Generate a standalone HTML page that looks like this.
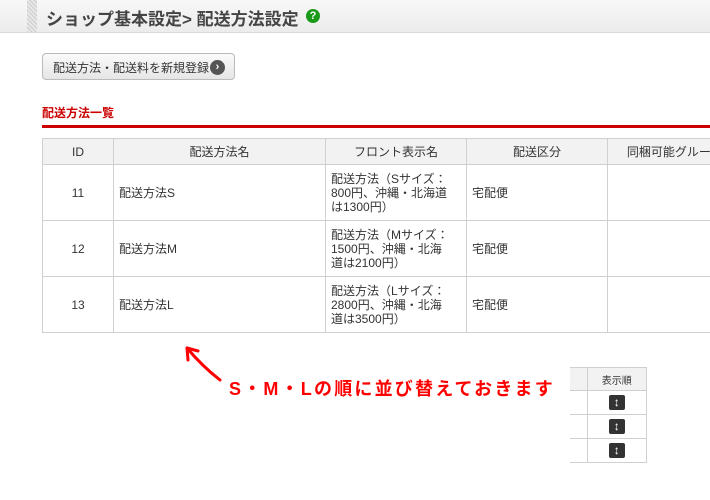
<!DOCTYPE html>
<html><head><meta charset="utf-8"><style>
*{margin:0;padding:0;box-sizing:border-box}
body{width:710px;height:500px;background:#fff;font-family:"Liberation Sans","Noto Sans CJK JP",sans-serif;color:#333;position:relative;overflow:hidden;font-size:12px}
.hdr{position:absolute;left:0;top:0;width:710px;height:33px;background:linear-gradient(#f8f8f8,#ececec);border-bottom:1px solid #d8d8dd}
.stripe{position:absolute;left:27px;top:0;width:10px;height:32px;background:repeating-linear-gradient(45deg,#ccc 0 1px,#e8e8e8 1px 3px)}
.title{position:absolute;left:46px;top:5px;font-size:17px;font-weight:bold;color:#444}
.help{position:absolute;left:306px;top:9px;width:14px;height:14px;border-radius:50%;background:#1a9a1a;color:#fff;font-size:11px;font-weight:bold;text-align:center;line-height:14px}
.btn{position:absolute;left:42px;top:53px;width:193px;height:27px;border:1px solid #bbb;border-radius:4px;background:linear-gradient(#fafafa,#e6e6e6);font-size:12px;color:#333;padding:5px 0 0 10px}
.btn i{position:absolute;left:167px;top:6px;width:15px;height:15px;border-radius:50%;background:#555;color:#fff;font-style:normal;font-size:11px;text-align:center;line-height:15px;font-weight:bold}
.sec{position:absolute;left:42px;top:104px;font-size:12px;font-weight:bold;color:#c00}
.red{position:absolute;left:42px;top:125px;width:668px;height:3px;background:#c00}
table{position:absolute;border-collapse:collapse;font-size:12px}
td,th{border:1px solid #d0d0d0;font-weight:normal}
th{background:#f2f2f2;height:26px}
.t td{height:56px;line-height:14px;padding:0 5px}
.c{text-align:center}
.note{position:absolute;left:229px;top:375px;font-size:18px;font-weight:bold;color:#f00;letter-spacing:2.2px}
.s th{font-size:10px;height:23px}
.s td{height:24px;text-align:center}
.ic{display:inline-block;width:16px;height:15px;background:#333;border-radius:2px;color:#fff;font-size:12px;line-height:15px;font-weight:bold;vertical-align:middle}
</style></head><body>
<div class="hdr"></div><div class="stripe"></div>
<div class="title">ショップ基本設定&gt; 配送方法設定</div>
<div class="help">?</div>
<div class="btn">配送方法・配送料を新規登録<i>›</i></div>
<div class="sec">配送方法一覧</div>
<div class="red"></div>
<table class="t" style="left:42px;top:138px;width:700px">
<tr><th style="width:71px">ID</th><th style="width:212px">配送方法名</th><th style="width:141px">フロント表示名</th><th style="width:141px">配送区分</th><th>同梱可能グループ</th></tr>
<tr><td class="c">11</td><td>配送方法S</td><td>配送方法（Sサイズ：<br>800円、沖縄・北海道<br>は1300円）</td><td>宅配便</td><td></td></tr>
<tr><td class="c">12</td><td>配送方法M</td><td>配送方法（Mサイズ：<br>1500円、沖縄・北海<br>道は2100円）</td><td>宅配便</td><td></td></tr>
<tr><td class="c">13</td><td>配送方法L</td><td>配送方法（Lサイズ：<br>2800円、沖縄・北海<br>道は3500円）</td><td>宅配便</td><td></td></tr>
</table>
<svg style="position:absolute;left:180px;top:340px" width="50" height="45"><path d="M40 40 Q22 26 7 8" stroke="#f00" stroke-width="3" fill="none" stroke-linecap="round"/><path d="M7 8 L8 20 M7 8 L18 11" stroke="#f00" stroke-width="3" fill="none" stroke-linecap="round"/></svg>
<div class="note">S・M・Lの順に並び替えておきます</div>
<table class="s" style="left:570px;top:367px;width:77px">
<tr><th style="width:17px;border-left:none"></th><th>表示順</th></tr>
<tr><td style="border-left:none"></td><td><span class="ic">↕</span></td></tr>
<tr><td style="border-left:none"></td><td><span class="ic">↕</span></td></tr>
<tr><td style="border-left:none"></td><td><span class="ic">↕</span></td></tr>
</table>
</body></html>
